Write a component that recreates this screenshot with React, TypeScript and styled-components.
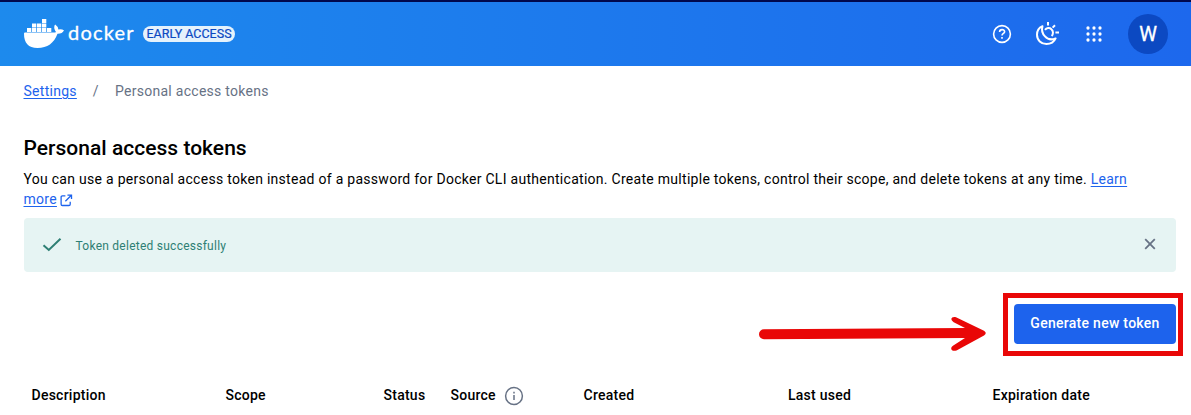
import React from "react";
import styled, { createGlobalStyle } from "styled-components";

const GlobalStyle = createGlobalStyle`
  * { box-sizing: border-box; }
  body { margin: 0; background: #fff; color: #000; font-family: Roboto, "Liberation Sans", sans-serif; font-size: 14px; letter-spacing: 0.28px; }
`;

const Page = styled.div`
  position: relative;
  height: 415px;
  overflow: hidden;
`;
const Header = styled.header`
  display: flex;
  align-items: center;
  height: 66px;
  padding: 0 23px 0 24px;
  border-top: 2px solid #00084d;
  background: linear-gradient(90deg, #1d8aed 0%, #1d68ed 100%);
  color: #fff;
`;
const Brand = styled.div`
  display: flex;
  align-items: center;
  flex: 1;
`;
const Wordmark = styled.span`
  width: 66px;
  margin: -5px 0 0 4px;
  font: 400 20px/24px Lato, sans-serif;
  letter-spacing: 1.2px;
  -webkit-text-stroke: 0.3px #fff;
  white-space: nowrap;
`;
const Badge = styled.span`
  width: 92px;
  height: 16px;
  margin-left: 9px;
  border-radius: 8px;
  background: #e5f2fc;
  color: #0c49c2;
  text-align: center;
  white-space: nowrap;
  font-size: 12.5px;
  line-height: 16px;
  font-weight: 400;
  letter-spacing: 0;
  -webkit-text-stroke: 0.2px #0c49c2;
`;
const Tools = styled.div`
  display: flex;
  align-items: center;
`;
const Tool = styled.span<{ $gap: number }>`
  display: flex;
  margin-right: ${(p) => p.$gap}px;
`;
const Avatar = styled.div`
  width: 40px;
  height: 40px;
  border-radius: 50%;
  background: #0c49c2;
  text-align: center;
  font-size: 20px;
  line-height: 41px;
  font-weight: 400;
  letter-spacing: 0;
  -webkit-text-stroke: 0.3px #fff;
`;
const Main = styled.main`
  padding: 15px 15px 0 23.5px;
`;
const Crumbs = styled.nav`
  display: flex;
  line-height: 20px;
  color: #677285;
`;
const Slash = styled.span`
  margin: 0 16px;
`;
const Link = styled.a`
  color: #1d63ed;
  text-decoration: underline;
  text-underline-offset: 2px;
`;
const Title = styled.h1`
  margin: 34px 0 0;
  font-size: 21px;
  line-height: 26px;
  font-weight: 500;
  letter-spacing: 0.02px;
`;
const Intro = styled.p`
  margin: 8px 0 0;
  line-height: 20px;
  svg { vertical-align: -3px; margin-left: 3.5px; }
`;
const Alert = styled.div`
  display: flex;
  align-items: center;
  height: 54px;
  margin: 9px 0 0 0.5px;
  padding: 0 20px 0 18px;
  border-radius: 4px;
  background: #e6f4f3;
  color: #2e7f74;
  font-size: 12px;
  letter-spacing: 0.25px;
`;
const AlertText = styled.span`
  flex: 1;
  margin-left: 13.5px;
  padding-top: 2px;
`;
const Actions = styled.div`
  display: flex;
  justify-content: flex-end;
  align-items: center;
  margin: 21px -7px 0 0;
`;
const Highlight = styled.div`
  width: 180px;
  height: 63px;
  margin-left: 16px;
  padding: 6px 0 0 6px;
  border: 5px solid #e90707;
`;
const Button = styled.button`
  display: block;
  width: 162px;
  height: 40px;
  padding: 0 0 2px;
  border: 0;
  border-radius: 4px;
  background: #1d63ed;
  color: #fff;
  font: 500 14px/20px Roboto, sans-serif;
  letter-spacing: 0.28px;
`;
const TableHead = styled.div`
  display: grid;
  grid-template-columns: 194px 158px 67px 133px 204.5px 204.5px 1fr;
  align-items: center;
  margin-top: 29px;
  padding-left: 8px;
  line-height: 20px;
  font-weight: 500;
  letter-spacing: 0.25px;
`;
const HeadCell = styled.div`
  display: flex;
  align-items: center;
  height: 20px;
  svg { margin: 2px 0 0 8px; }
`;

const Whale = () => (
  <svg width="40" height="30" viewBox="0 0 40 30" fill="#fff">
    <path d="M0 14.6Q0 13.6 1 13.6H29.5Q31.5 13.6 32 12.9Q29.4 9.6 30.6 6.3L31.2 5.6Q34 7.5 34.4 10.5Q37.4 9.8 40 11.2Q38.4 14.8 33.5 14.7C30.1 24 23.4 29 13.5 29C4.3 29 0 24.2 0 14.6Z" />
    <path d="M3 9h4.3v4H3zM8 9h4.3v4H8zM13 9h4.3v4H13zM18 9h4.3v4H18zM23 9h4.3v4H23zM8 4.5h4.3v4H8zM13 4.5h4.3v4H13zM18 4.5h4.3v4H18zM18 0h4.3v4H18z" />
  </svg>
);

const HelpIcon = () => (
  <svg width="20" height="20" viewBox="0 0 20 20" fill="none" stroke="#fff" strokeWidth="1.6">
    <circle cx="10" cy="10" r="8.4" />
    <path d="M7.6 8.1C7.6 4.8 12.6 4.9 12.6 7.8C12.6 9.5 10 9.4 10 11.6" />
    <path d="M10 13v1.8" />
  </svg>
);

const ThemeIcon = () => (
  <svg width="24" height="24" viewBox="0 0 24 24" fill="none" stroke="#fff" strokeWidth="2" strokeLinejoin="round">
    <path d="M7.5 4.2C3.8 5.8 2 9.1 2 12.8C2 18.2 6.2 22 11.4 22C15.6 22 19.2 19.6 20.6 16.4C16.8 18 12.5 17.2 10 14.4C7.2 11.4 6.5 7.5 7.5 4.2Z" />
    <path d="M10 7.8C11.5 5.7 14.6 5.4 16.4 7.2C18.4 9 18.5 12.2 16.6 14" />
    <path d="M13 0v3.4M20 3.2L17.6 5.6M24 10.5h-3.6" />
  </svg>
);

const AppsIcon = () => (
  <svg width="16" height="16" viewBox="0 0 16 16" fill="#fff">
    {[2, 8, 14].map((y) => [2, 8, 14].map((x) => <circle key={`${x}-${y}`} cx={x} cy={y} r="1.65" />))}
  </svg>
);

const ExternalIcon = () => (
  <svg width="13" height="13" viewBox="0 0 14 14" fill="none" stroke="#1d63ed" strokeWidth="1.4">
    <path d="M5.8 2H2.6Q1.2 2 1.2 3.4V11Q1.2 12.4 2.6 12.4H9.6Q11 12.4 11 11V8.3M8 1.2H12.4V5.5M12.2 1.4L5.8 7.8" />
  </svg>
);

const CheckIcon = () => (
  <svg width="20" height="20" viewBox="0 0 20 20" fill="none" stroke="#2e7f74" strokeWidth="2">
    <path d="M1.5 10.2L6.8 15L18.5 3.8" />
  </svg>
);

const CloseIcon = () => (
  <svg width="12" height="14" viewBox="0 0 12 14" stroke="#677285" strokeWidth="1.8">
    <path d="M1.2 1.2L10.8 10.8M10.8 1.2L1.2 10.8" />
  </svg>
);

const InfoIcon = () => (
  <svg width="20" height="20" viewBox="0 0 20 20" fill="none" stroke="#677285" strokeWidth="1.5">
    <circle cx="10" cy="10" r="8.4" />
    <path d="M10 9v5M10 5.8v1.7" />
  </svg>
);

const ArrowSlot = styled.div`
  display: flex;
  padding-top: 18px;
`;
const Arrow = () => (
  <ArrowSlot>
    <svg width="228" height="38" viewBox="0 0 228 38" fill="#e90707">
      <path d="M5 14.2L206 13L194.7 7.2C190.5 4.6 192.5 1 197 2.2L225 15.8Q228.5 18 225 20.6L197.5 35.4C193 37.2 190 33.2 194.3 30.4L206 23L5 24.2A5 5 0 0 1 5 14.2Z" />
    </svg>
  </ArrowSlot>
);

const columns = ["Description", "Scope", "Status", "Source", "Created", "Last used", "Expiration date"];

export default function App() {
  return (
    <Page>
      <GlobalStyle />
      <Header>
        <Brand>
          <Whale />
          <Wordmark>docker</Wordmark>
          <Badge>EARLY ACCESS</Badge>
        </Brand>
        <Tools>
          <Tool $gap={23}><HelpIcon /></Tool>
          <Tool $gap={27}><ThemeIcon /></Tool>
          <Tool $gap={26}><AppsIcon /></Tool>
          <Avatar>W</Avatar>
        </Tools>
      </Header>
      <Main>
        <Crumbs>
          <Link>Settings</Link>
          <Slash>/</Slash>
          <span>Personal access tokens</span>
        </Crumbs>
        <Title>Personal access tokens</Title>
        <Intro>
          You can use a personal access token instead of a password for Docker CLI authentication. Create multiple
          tokens, control their scope, and delete tokens at any time. <Link>Learn<br />more</Link>
          <ExternalIcon />
        </Intro>
        <Alert>
          <CheckIcon />
          <AlertText>Token deleted successfully</AlertText>
          <CloseIcon />
        </Alert>
        <Actions>
          <Arrow />
          <Highlight>
            <Button>Generate new token</Button>
          </Highlight>
        </Actions>
        <TableHead>
          {columns.map((name) => (
            <HeadCell key={name}>
              {name}
              {name === "Source" && <InfoIcon />}
            </HeadCell>
          ))}
        </TableHead>
      </Main>
    </Page>
  );
}
